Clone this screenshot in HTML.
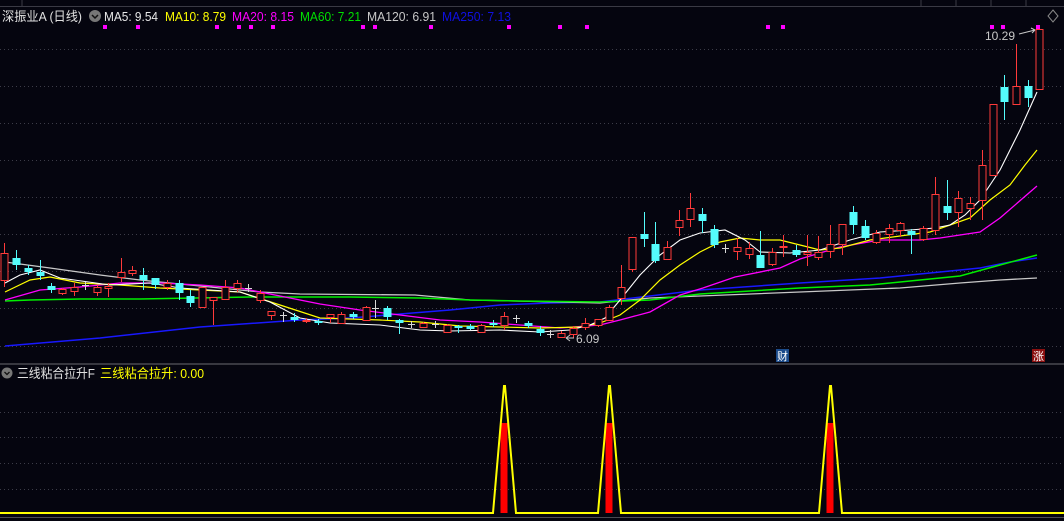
<!DOCTYPE html>
<html><head><meta charset="utf-8"><style>
html,body{margin:0;padding:0;background:#05050f;width:1064px;height:521px;overflow:hidden}
svg{display:block}
text{font-family:"Liberation Sans","Noto Sans CJK SC",sans-serif}
</style></head><body>
<svg id="s" width="1064" height="521" xmlns="http://www.w3.org/2000/svg">
<rect width="1064" height="521" fill="#05050f"/>
<line x1="0" y1="6.5" x2="1064" y2="6.5" stroke="#3a3a44"/>
<g stroke="#3a3a44"><line x1="22" y1="0" x2="22" y2="6"/><line x1="921" y1="0" x2="921" y2="6"/><line x1="956" y1="0" x2="956" y2="6"/><line x1="991" y1="0" x2="991" y2="6"/><line x1="1026" y1="0" x2="1026" y2="6"/></g>
<g id="grid" stroke="#3c3c48" stroke-dasharray="1,3"></g>
<text x="2" y="21" fill="#e0e0e0" font-size="13" textLength="80" lengthAdjust="spacingAndGlyphs">深振业A (日线)</text>
<circle cx="95" cy="16" r="6" fill="#777"/><path d="M92 15l3 3 3-3" stroke="#111" fill="none" stroke-width="1.5"/>
<text x="104" y="21" font-size="13" fill="#e8e8e8" textLength="54" lengthAdjust="spacingAndGlyphs">MA5: 9.54</text>
<text x="165" y="21" font-size="13" fill="#ffff00" textLength="61" lengthAdjust="spacingAndGlyphs">MA10: 8.79</text>
<text x="232" y="21" font-size="13" fill="#ff00ff" textLength="62" lengthAdjust="spacingAndGlyphs">MA20: 8.15</text>
<text x="300" y="21" font-size="13" fill="#00e000" textLength="61" lengthAdjust="spacingAndGlyphs">MA60: 7.21</text>
<text x="367" y="21" font-size="13" fill="#c8c8c8" textLength="69" lengthAdjust="spacingAndGlyphs">MA120: 6.91</text>
<text x="442" y="21" font-size="13" fill="#1010e0" textLength="69" lengthAdjust="spacingAndGlyphs">MA250: 7.13</text>
<g id="dots" fill="#ff00ff"></g>
<path d="M1053 10l5 6-5 6-5-6z" stroke="#888" fill="none"/>
<g id="ma"></g>
<g id="cd"></g>
<text x="576" y="343" fill="#c8c8c8" font-size="12">6.09</text>
<path d="M574 338h-8M566 338l4-3M566 338l4 3" stroke="#c8c8c8" fill="none"/>
<text x="985" y="40" fill="#c8c8c8" font-size="12">10.29</text>
<path d="M1019 34l16-4M1035 30l-4-2M1035 30l-3 3" stroke="#c8c8c8" fill="none"/>
<rect x="776" y="349" width="13" height="13" fill="#1a4a8a"/><text x="777" y="360" fill="#fff" font-size="11">财</text>
<rect x="1032" y="349" width="13" height="13" fill="#8a0f0f"/><text x="1033" y="360" fill="#fff" font-size="11">涨</text>
<line x1="0" y1="364" x2="1064" y2="364" stroke="#4a4a50" stroke-width="1.5"/>
<circle cx="7" cy="373" r="5.5" fill="#777"/><path d="M4.5 372l2.5 2.5 2.5-2.5" stroke="#111" fill="none" stroke-width="1.3"/>
<text x="17" y="378" fill="#e0e0e0" font-size="13" textLength="78" lengthAdjust="spacingAndGlyphs">三线粘合拉升F</text>
<text x="100" y="378" fill="#ffff00" font-size="13" textLength="104" lengthAdjust="spacingAndGlyphs">三线粘合拉升: 0.00</text>
<g id="low"></g>
<line x1="0" y1="517.5" x2="1064" y2="517.5" stroke="#4a4a50"/>
</svg>
<script>
var NS="http://www.w3.org/2000/svg";
function el(p,t,a){var e=document.createElementNS(NS,t);for(var k in a)e.setAttribute(k,a[k]);document.getElementById(p).appendChild(e);return e;}
[49,86,123,160,197,234,271,308,346,412,437,463,489].forEach(function(y){el('grid','line',{x1:0,y1:y+.5,x2:1064,y2:y+.5});});
[105,138,217,239,251,273,363,375,431,509,560,587,768,783,992,1003,1038].forEach(function(x){el('dots','rect',{x:x-2,y:25,width:4,height:4});});
function pl(c,pts,w){el('ma','polyline',{points:pts.map(function(p){return p.join(',')}).join(' '),fill:'none',stroke:c,'stroke-width':w||1.2});}
pl('#1818ff',[[5,346],[100,338],[200,327],[300,320],[350,318],[400,314],[450,310],[500,305],[550,303],[600,302],[650,296],[700,290],[800,283],[880,278],[940,272],[980,268],[1010,262],[1037,258]],1.5);
pl('#c8c8c8',[[5,262],[50,268],[100,275],[140,280],[200,286],[260,292],[300,294],[415,295],[470,300],[600,303],[650,298],[700,296],[800,292],[900,288],[960,283],[1000,280],[1037,278]],1.3);
pl('#00ee00',[[5,301],[30,300],[80,299],[140,299],[250,297],[350,297],[420,298],[470,300],[520,301],[600,302],[650,300],[700,294],[800,288],[870,285],[920,280],[960,276],[1000,265],[1037,255]],1.5);
pl('#ff00ff',[[5,300],[40,290],[80,287],[120,283],[160,283],[200,285],[240,288],[280,296],[320,304],[360,310],[400,315],[440,320],[480,322],[520,325],[560,328],[600,325],[620,320],[650,312],[680,295],[703,288],[735,277],[780,268],[800,259],[840,247],[880,240],[920,240],[940,238],[980,232],[1000,218],[1037,186]],1.3);
pl('#ffff00',[[5,292],[30,280],[50,277],[80,283],[120,285],[160,288],[200,290],[240,292],[280,305],[320,318],[380,320],[420,322],[460,326],[500,327],[540,328],[580,327],[600,323],[620,315],[640,300],[660,280],[680,265],[700,252],[720,242],[740,238],[760,240],[780,240],[800,245],[820,250],[840,248],[870,240],[900,236],[930,232],[950,225],[970,218],[990,200],[1010,185],[1025,165],[1037,150]],1.2);
pl('#ffffff',[[5,283],[20,275],[40,270],[60,278],[110,285],[150,283],[180,288],[210,290],[240,292],[270,302],[300,318],[330,323],[380,325],[420,330],[450,331],[500,330],[540,332],[570,330],[590,325],[605,318],[620,300],[640,275],[660,255],[680,240],[700,233],[725,230],[745,240],[760,252],[790,253],[820,250],[850,240],[880,232],[910,230],[935,228],[950,225],[965,215],[980,200],[1000,170],[1020,130],[1037,92]],1.1);
var C=[[4,253,280,243,287,'r'],[16,258,265,250,270,'c'],[28,268,272,265,275,'c'],[40,272,276,260,280,'c'],[51,286,290,283,293,'c'],[62,289,293,288,295,'r'],[74,287,291,283,296,'r'],[85,285,286,282,290,'x'],[97,287,292,285,296,'r'],[108,286,288,283,297,'r'],[121,272,277,258,282,'r'],[132,270,273,266,276,'r'],[143,275,280,268,290,'c'],[155,278,285,278,289,'c'],[167,283,287,280,290,'r'],[179,283,293,280,300,'c'],[190,296,303,290,307,'c'],[202,287,307,287,307,'r'],[213,297,300,297,325,'r'],[225,287,299,280,300,'r'],[237,283,288,280,292,'r'],[248,288,289,284,292,'x'],[260,293,300,290,303,'r'],[271,311,315,311,320,'r'],[283,315,316,312,322,'x'],[294,317,320,313,322,'c'],[306,320,322,318,323,'f'],[318,321,323,319,325,'c'],[330,314,317,314,323,'r'],[341,314,323,312,323,'r'],[353,314,317,312,319,'c'],[366,307,320,306,320,'r'],[375,308,309,300,318,'x'],[387,308,317,306,320,'c'],[399,320,323,319,334,'c'],[411,324,325,321,328,'x'],[423,323,327,322,328,'r'],[435,324,325,321,328,'x'],[447,325,332,324,332,'r'],[458,326,327,325,333,'c'],[470,326,329,324,330,'c'],[481,325,332,324,332,'r'],[493,323,325,320,327,'c'],[504,316,325,312,330,'r'],[516,318,319,315,323,'x'],[528,323,326,321,328,'c'],[540,329,333,326,336,'c'],[550,334,335,330,338,'x'],[561,333,337,331,338,'r'],[573,328,334,326,338,'r'],[585,323,327,318,330,'r'],[598,319,325,319,327,'r'],[609,307,320,305,320,'r'],[621,287,298,265,305,'r'],[632,237,269,237,272,'r'],[644,234,239,212,247,'c'],[655,244,261,222,263,'c'],[667,247,259,241,260,'r'],[679,220,227,210,236,'r'],[690,208,219,193,227,'r'],[702,214,221,208,233,'c'],[714,229,245,225,248,'c'],[725,248,250,244,253,'x'],[737,247,251,238,260,'r'],[749,248,254,242,259,'r'],[760,255,268,231,268,'c'],[772,252,264,248,266,'r'],[783,246,248,235,257,'f'],[796,250,255,245,257,'c'],[807,252,254,235,266,'r'],[818,252,257,236,260,'r'],[830,244,251,225,258,'r'],[842,224,244,224,255,'r'],[853,212,225,206,234,'c'],[865,226,238,220,240,'c'],[876,233,242,230,244,'r'],[889,228,234,224,243,'r'],[900,223,230,222,237,'r'],[911,231,235,229,254,'c'],[923,228,239,226,241,'r'],[935,194,230,177,235,'r'],[947,206,213,180,220,'c'],[958,198,212,191,227,'r'],[970,203,208,197,220,'r'],[982,165,200,150,220,'r'],[993,104,175,104,175,'r'],[1004,87,102,75,120,'c'],[1016,86,104,44,104,'r'],[1028,86,98,80,107,'c'],[1039,29,89,29,89,'r']];
C.forEach(function(d){var x=d[0],t=d[5];
 var col=t=='r'||t=='f'?'#ff3a3a':(t=='c'?'#54fcfc':'#d8d8d8');
 el('cd','line',{x1:x+.5,y1:d[3],x2:x+.5,y2:d[4],stroke:col});
 if(t=='x'){el('cd','line',{x1:x-3,y1:d[1]+.5,x2:x+4,y2:d[1]+.5,stroke:col});return;}
 if(t=='r')el('cd','rect',{x:x-3,y:d[1]+.5,width:7,height:Math.max(d[2]-d[1],1),fill:'#05050f',stroke:col});
 else el('cd','rect',{x:x-3.5,y:d[1],width:8,height:Math.max(d[2]-d[1],2),fill:col});
});
var pk=[504,609,830];
pk.forEach(function(x){el('low','rect',{x:x-3.5,y:423,width:7,height:90,fill:'#ff0000'});});
var pts='0,513 ';pk.forEach(function(x){pts+=(x-11)+',513 '+x+',386 '+(x+1)+',386 '+(x+12)+',513 ';});pts+='1064,513';
el('low','polyline',{points:pts,fill:'none',stroke:'#ffff00','stroke-width':2});
</script>
</body></html>
